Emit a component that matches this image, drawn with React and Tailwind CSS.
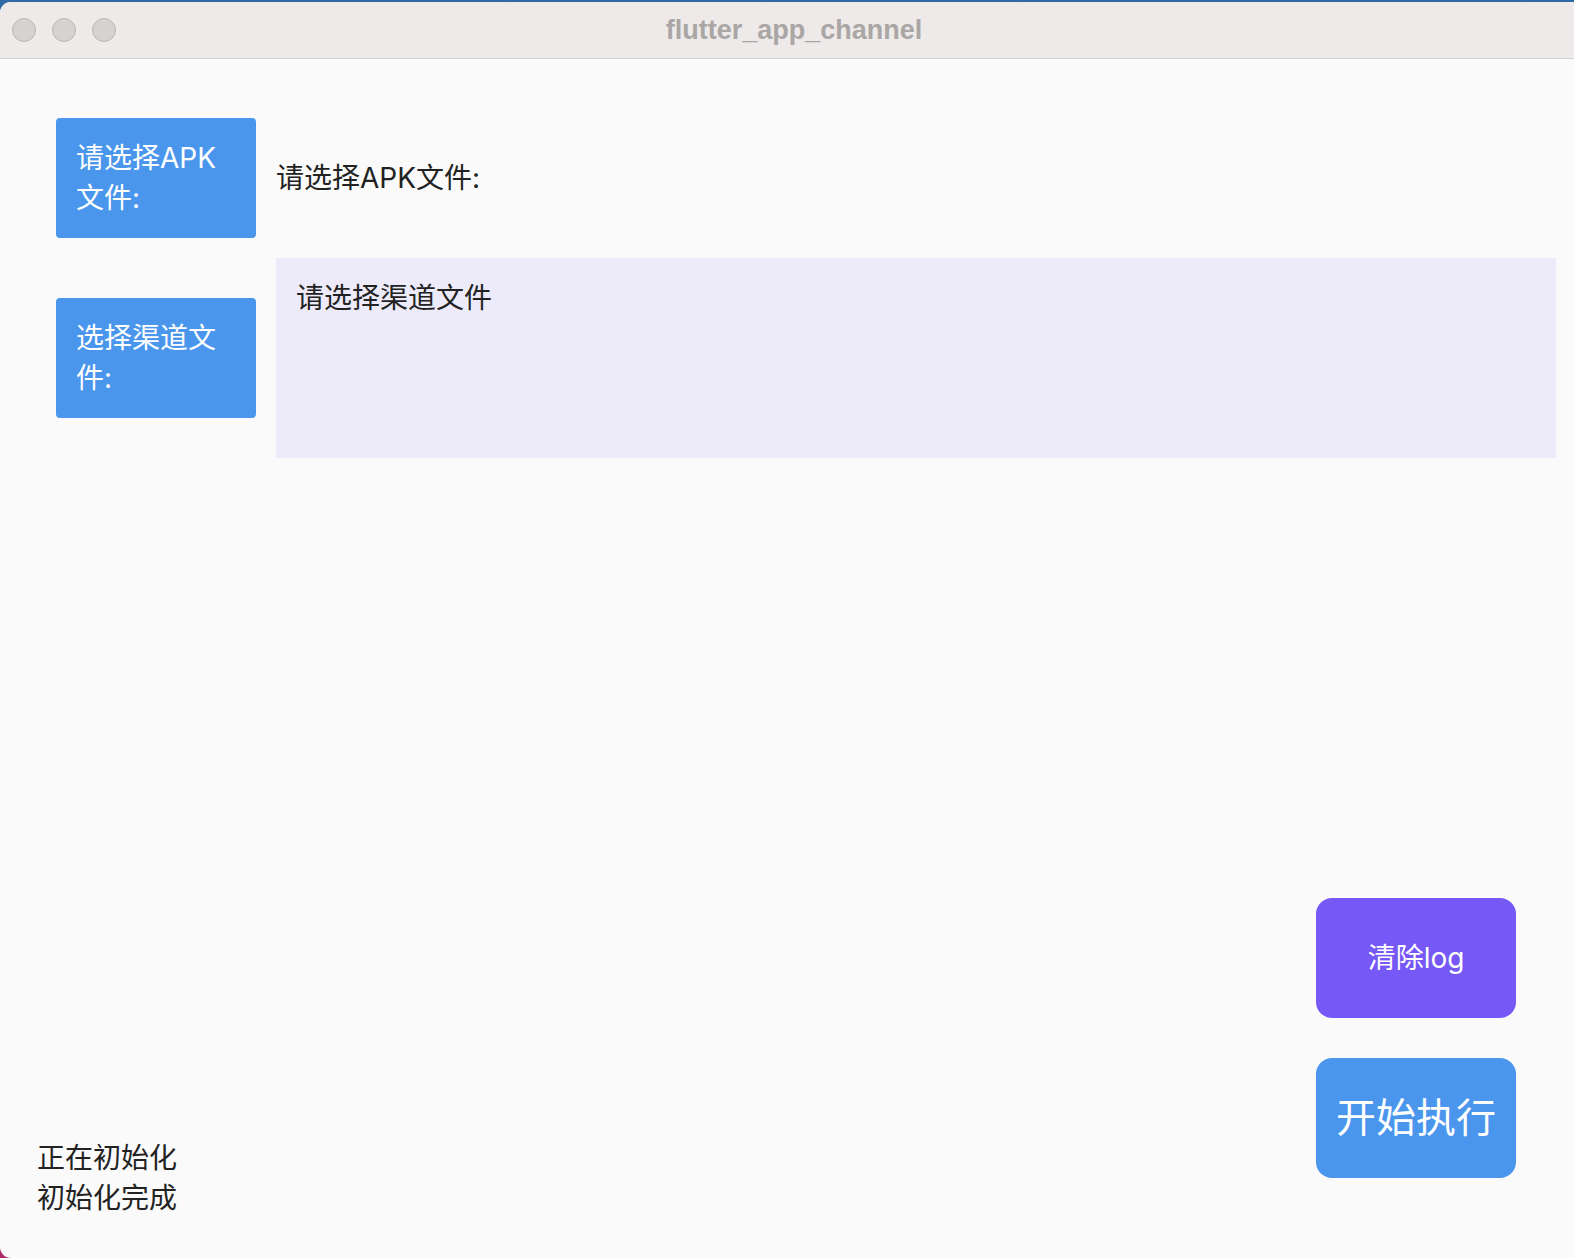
export default function App() {
  const font = { fontFamily: 'Inter, "Noto Sans CJK SC", sans-serif' };

  return (
    <div className="h-[1258px] w-full overflow-hidden bg-gradient-to-b from-[#2d6aa6] via-[#6b4a8a] to-[#b02a6a] pt-[2px]">
      <div
        className="flex h-full flex-col overflow-hidden rounded-l-[11px] bg-[#fafafa]"
        style={font}
      >
        {/* Title bar */}
        <div className="relative flex h-[57px] shrink-0 items-center border-b border-[#d6d3d2] bg-[#eeeae9]">
          <div className="flex gap-4 pl-3">
            <span className="h-6 w-6 rounded-full border border-[#bcb8b7] bg-[#d6d2d1]" />
            <span className="h-6 w-6 rounded-full border border-[#bcb8b7] bg-[#d6d2d1]" />
            <span className="h-6 w-6 rounded-full border border-[#bcb8b7] bg-[#d6d2d1]" />
          </div>
          <div className="absolute inset-x-0 pl-[14px] text-center text-[27px] font-bold text-[#a9a6a5] [font-family:'Liberation_Sans',sans-serif]">
            flutter_app_channel
          </div>
        </div>

        {/* Content */}
        <div className="flex flex-1 flex-col pl-14 pr-[18px] pt-[59px]">
          <div className="flex items-center gap-5">
            <button className="flex h-[120px] w-[200px] shrink-0 items-center rounded-[4px] bg-[#4a96ec] px-5 text-left text-[28px] leading-[40px] text-white">
              请选择APK文件:
            </button>
            <span className="text-[28px] leading-[40px] text-[#222222]">
              请选择APK文件:
            </span>
          </div>

          <div className="mt-5 flex items-center gap-5">
            <button className="flex h-[120px] w-[200px] shrink-0 items-center rounded-[4px] bg-[#4a96ec] px-5 text-left text-[28px] leading-[40px] text-white">
              选择渠道文件:
            </button>
            <div className="h-[200px] flex-1 bg-[#edebf9] p-5 text-[28px] leading-[40px] text-[#222222]">
              请选择渠道文件
            </div>
          </div>

          <div className="flex flex-1 items-end justify-between pb-10 pr-10">
            <div className="-ml-[19px] text-[28px] leading-[40px] text-[#222222]">
              <div>正在初始化</div>
              <div>初始化完成</div>
            </div>
            <div className="flex flex-col gap-10 pb-10">
              <button className="flex h-[120px] w-[200px] items-center justify-center rounded-[16px] bg-[#7558f6] text-[28px] text-white">
                清除log
              </button>
              <button className="flex h-[120px] w-[200px] items-center justify-center rounded-[16px] bg-[#4a96ec] text-[40px] text-white">
                开始执行
              </button>
            </div>
          </div>
        </div>
      </div>
    </div>
  );
}
